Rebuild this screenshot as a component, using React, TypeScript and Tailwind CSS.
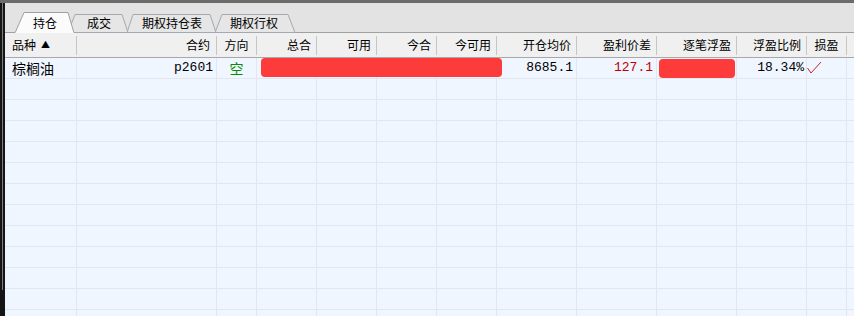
import React from "react";

const cjk = "font-['Noto_Sans_CJK_SC',sans-serif]";
const mono = "font-['Liberation_Mono','Noto_Sans_CJK_SC',monospace]";

const headers = [
  { label: "品种", w: "w-[72px]", align: "justify-start pl-[7px]" },
  { label: "合约", w: "w-[140px]", align: "justify-end pr-[6px]" },
  { label: "方向", w: "w-[40px]", align: "justify-center" },
  { label: "总合", w: "w-[60px]", align: "justify-end pr-[5px]" },
  { label: "可用", w: "w-[60px]", align: "justify-end pr-[5px]" },
  { label: "今合", w: "w-[60px]", align: "justify-end pr-[5px]" },
  { label: "今可用", w: "w-[60px]", align: "justify-end pr-[5px]" },
  { label: "开仓均价", w: "w-[80px]", align: "justify-end pr-[5px]" },
  { label: "盈利价差", w: "w-[80px]", align: "justify-end pr-[5px]" },
  { label: "逐笔浮盈", w: "w-[80px]", align: "justify-end pr-[5px]" },
  { label: "浮盈比例", w: "w-[70px]", align: "justify-end pr-[5px]" },
  { label: "损盈", w: "w-[40px]", align: "justify-center" },
];

const tabs = [
  { label: "持仓", w: "w-[60px]" },
  { label: "成交", w: "w-[48px]" },
  { label: "期权持仓表", w: "w-[98px]" },
  { label: "期权行权", w: "w-[66px]" },
];

function CheckMark() {
  return (
    <svg width="15" height="14" viewBox="0 0 15 14">
      <path d="M0.5 7 L4 12 L14 1" fill="none" stroke="#cc2222" strokeWidth="1" />
    </svg>
  );
}

function TabStrip() {
  return (
    <div className="relative h-[30px] shrink-0 bg-[#e3e3e3]">
      <svg className="absolute inset-0" width="849" height="30">
        <line x1="0" y1="29.5" x2="849" y2="29.5" stroke="#a0a0a0" />
        <polygon points="210,29.5 217,11.5 283,11.5 290,29.5" fill="#e6e6e6" stroke="#a3a9b0" />
        <polygon points="122,29.5 128,11.5 205,11.5 211,29.5" fill="#e6e6e6" stroke="#a3a9b0" />
        <polygon points="63,29.5 70,11.5 117,11.5 123,29.5" fill="#e6e6e6" stroke="#a3a9b0" />
        <polygon points="10,30 19,9.5 63,9.5 69,30" fill="#fbfbfb" stroke="#9aa0a6" />
        <line x1="10.5" y1="29.5" x2="68.5" y2="29.5" stroke="#fbfbfb" />
      </svg>
      <div className={`relative flex pl-[10px] pt-[12px] text-[12px] text-black ${cjk}`}>
        {tabs.map((t) => (
          <div key={t.label} className={`${t.w} h-[16px] leading-[16px] text-center`}>
            {t.label}
          </div>
        ))}
      </div>
    </div>
  );
}

function HeaderRow() {
  return (
    <div className={`flex shrink-0 h-[25px] bg-[#f0f0f0] border-b border-[#a8a8a8] text-[12px] text-black ${cjk}`}>
      {headers.map((h, i) => (
        <div key={h.label} className={`flex items-center shrink-0 ${h.w}`}>
          <div className={`flex-1 h-full flex items-center whitespace-nowrap ${h.align}`}>
            {h.label}
            {i === 0 && <span className="ml-[5px] text-[9px]">▲</span>}
          </div>
          <div className="w-px h-[19px] bg-[#c6c6c6]" />
        </div>
      ))}
      <div className="flex-1" />
    </div>
  );
}

function EmptyRow() {
  return (
    <div className="flex h-[21px] shrink-0 border-b border-[#e3e7ed]">
      {headers.map((h) => (
        <div key={h.label} className={`shrink-0 border-r border-[#e3e7ed] ${h.w}`} />
      ))}
      <div className="flex-1" />
    </div>
  );
}

function DataRow() {
  const cell = "shrink-0 border-r border-[#e3e7ed] h-full flex items-center";
  return (
    <div className="relative flex h-[21px] shrink-0 border-b border-[#e3e7ed] text-black">
      <div className={`${cell} w-[72px] pl-[7px] text-[14px] ${cjk}`}>棕榈油</div>
      <div className={`${cell} w-[140px] justify-end pr-[3px] text-[13px] ${mono}`}>p2601</div>
      <div className={`${cell} w-[40px] justify-center text-[14px] text-[#0a8a0a] ${cjk}`}>空</div>
      <div className={`${cell} w-[60px]`} />
      <div className={`${cell} w-[60px]`} />
      <div className={`${cell} w-[60px]`} />
      <div className={`${cell} w-[60px]`} />
      <div className={`${cell} w-[80px] justify-end pr-[3px] text-[13px] ${mono}`}>8685.1</div>
      <div className={`${cell} w-[80px] justify-end pr-[3px] text-[13px] text-[#c00000] ${mono}`}>127.1</div>
      <div className={`${cell} w-[80px]`} />
      <div className={`${cell} w-[70px] justify-end pr-[2px] text-[13px] ${mono}`}>18.34%</div>
      <div className={`${cell} w-[40px]`}>
        <CheckMark />
      </div>
      <div className="flex-1" />
      <div className="absolute left-[256px] top-0 w-[241px] h-[19px] rounded-[4px] bg-[#fd3b3a]" />
      <div className="absolute left-[654px] top-[1px] w-[76px] h-[19px] rounded-[4px] bg-[#fd3b3a]" />
    </div>
  );
}

export default function App() {
  return (
    <div className="w-[854px] h-[316px] overflow-hidden flex flex-col bg-[#f0f6ff]">
      <div className="h-[3px] shrink-0 bg-[#6b6b6b]" />
      <div className="flex flex-1 min-h-0">
        <div className="w-[5px] shrink-0 bg-[#151515]">
          <div className="ml-[2px] w-px h-[287px] bg-[#7d7d7d]" />
        </div>
        <div className="flex-1 min-w-0 flex flex-col overflow-hidden">
          <TabStrip />
          <HeaderRow />
          <div className="flex flex-col shrink-0 bg-[#f0f6ff]">
            <DataRow />
            {Array.from({ length: 12 }).map((_, i) => (
              <EmptyRow key={i} />
            ))}
          </div>
        </div>
      </div>
    </div>
  );
}
